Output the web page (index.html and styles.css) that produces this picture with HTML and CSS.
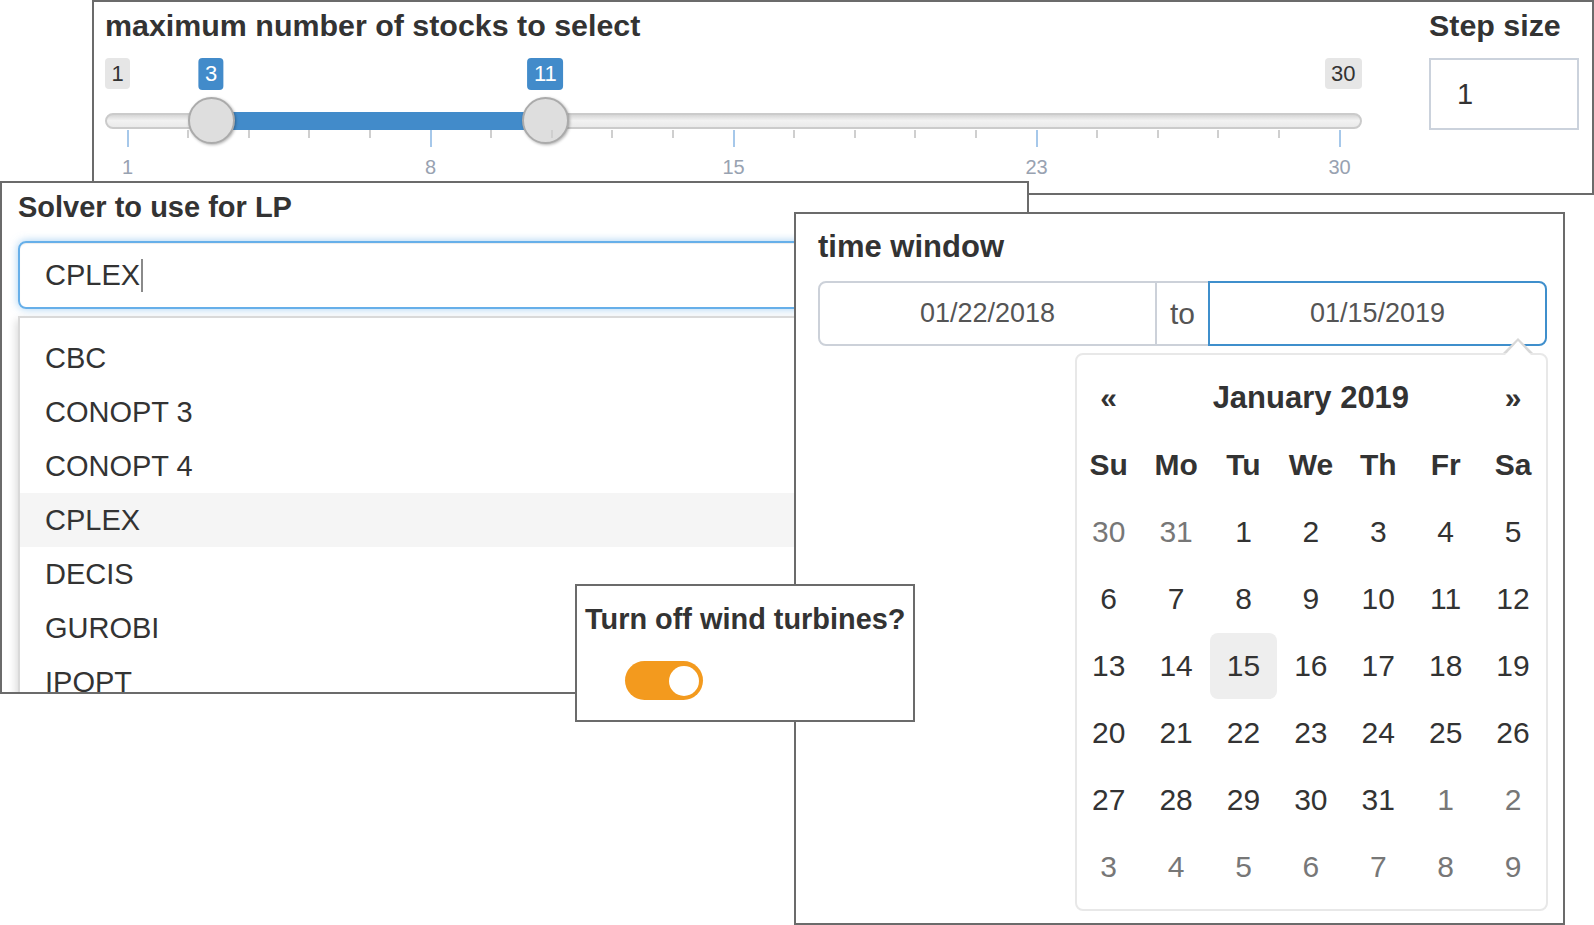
FILE: index.html
```html
<!DOCTYPE html>
<html lang="en">
<head>
<meta charset="utf-8">
<title>Shiny inputs</title>
<link rel="stylesheet" href="styles.css">
</head>
<body>
<main class="canvas">

  <section class="win win-slider">
    <div class="slider-col">
      <div class="ctl-label lbl-30">maximum number of stocks to select</div>
      <div class="irs">
        <div class="irs-line"></div>
        <span class="irs-min">1</span>
        <span class="irs-max">30</span>
        <div class="irs-scale">
          <div class="irs-bar" style="left:6.8966%;width:27.5862%"></div>
          <span class="irs-single" style="left:6.8966%">3</span>
          <span class="irs-single" style="left:34.4828%">11</span>
          <span class="irs-handle" style="left:6.8966%"></span>
          <span class="irs-handle" style="left:34.4828%"></span>

          <span class="tick major" style="left:0%"></span>
          <span class="tick" style="left:5%"></span>
          <span class="tick" style="left:10%"></span>
          <span class="tick" style="left:15%"></span>
          <span class="tick" style="left:20%"></span>
          <span class="tick major" style="left:25%"></span>
          <span class="tick" style="left:30%"></span>
          <span class="tick" style="left:35%"></span>
          <span class="tick" style="left:40%"></span>
          <span class="tick" style="left:45%"></span>
          <span class="tick major" style="left:50%"></span>
          <span class="tick" style="left:55%"></span>
          <span class="tick" style="left:60%"></span>
          <span class="tick" style="left:65%"></span>
          <span class="tick" style="left:70%"></span>
          <span class="tick major" style="left:75%"></span>
          <span class="tick" style="left:80%"></span>
          <span class="tick" style="left:85%"></span>
          <span class="tick" style="left:90%"></span>
          <span class="tick" style="left:95%"></span>
          <span class="tick major" style="left:100%"></span>

          <span class="tick-label" style="left:0%">1</span>
          <span class="tick-label" style="left:25%">8</span>
          <span class="tick-label" style="left:50%">15</span>
          <span class="tick-label" style="left:75%">23</span>
          <span class="tick-label" style="left:100%">30</span>
        </div>
      </div>
    </div>
    <div class="step-col">
      <div class="ctl-label lbl-30">Step size</div>
      <div class="num-input">1</div>
    </div>
  </section>

  <section class="win win-solver">
    <div class="ctl-label lbl-29">Solver to use for LP</div>
    <div class="sel-input"><span>CPLEX</span><span class="caret"></span></div>
    <div class="sel-dropdown">
      <div class="opt">CBC</div>
      <div class="opt">CONOPT 3</div>
      <div class="opt">CONOPT 4</div>
      <div class="opt active">CPLEX</div>
      <div class="opt">DECIS</div>
      <div class="opt">GUROBI</div>
      <div class="opt">IPOPT</div>
    </div>
  </section>

  <section class="win win-time">
    <div class="ctl-label lbl-31">time window</div>
    <div class="daterange">
      <div class="date-in date-left">01/22/2018</div>
      <div class="date-addon">to</div>
      <div class="date-in date-right">01/15/2019</div>
    </div>
    <div class="dp">
      <div class="dp-grid">
        <div class="dp-nav">«</div>
        <div class="dp-title">January 2019</div>
        <div class="dp-nav">»</div>

        <div class="dow">Su</div><div class="dow">Mo</div><div class="dow">Tu</div><div class="dow">We</div><div class="dow">Th</div><div class="dow">Fr</div><div class="dow">Sa</div>

        <div class="day old">30</div><div class="day old">31</div><div class="day">1</div><div class="day">2</div><div class="day">3</div><div class="day">4</div><div class="day">5</div>
        <div class="day">6</div><div class="day">7</div><div class="day">8</div><div class="day">9</div><div class="day">10</div><div class="day">11</div><div class="day">12</div>
        <div class="day">13</div><div class="day">14</div><div class="day active">15</div><div class="day">16</div><div class="day">17</div><div class="day">18</div><div class="day">19</div>
        <div class="day">20</div><div class="day">21</div><div class="day">22</div><div class="day">23</div><div class="day">24</div><div class="day">25</div><div class="day">26</div>
        <div class="day">27</div><div class="day">28</div><div class="day">29</div><div class="day">30</div><div class="day">31</div><div class="day new">1</div><div class="day new">2</div>
        <div class="day new">3</div><div class="day new">4</div><div class="day new">5</div><div class="day new">6</div><div class="day new">7</div><div class="day new">8</div><div class="day new">9</div>
      </div>
    </div>
  </section>

  <section class="win win-turb">
    <div class="ctl-label lbl-285">Turn off wind turbines?</div>
    <div class="switch"><span class="knob"></span></div>
  </section>

</main>
</body>
</html>
```

FILE: styles.css
```css
* { box-sizing: border-box; }
html, body { margin: 0; padding: 0; }
body {
  width: 1594px;
  height: 925px;
  overflow: hidden;
  background: #fff;
  color: #333;
  font-family: "Liberation Sans", Arial, Helvetica, sans-serif;
}
.canvas { position: relative; width: 1594px; height: 925px; }

/* floating windows on the canvas */
.win {
  position: absolute;
  background: #fff;
  border: 2px solid #6b6b6b;
}
.ctl-label { font-weight: bold; color: #333; white-space: nowrap; }
.lbl-30 { font-size: 30.4px; line-height: 34px; }
.lbl-29 { font-size: 29px; line-height: 33px; }
.lbl-31 { font-size: 31px; line-height: 36px; }
.lbl-285 { font-size: 28.9px; line-height: 33px; }

/* ---------- slider window ---------- */
.win-slider {
  left: 92px; top: 0; width: 1502px; height: 195px;
  padding: 6px 13px 0 11px;
  display: flex; gap: 67px;
  z-index: 1;
}
.slider-col { width: 1257px; flex: none; }
.step-col { width: 150px; flex: none; }

.irs { position: relative; height: 125px; margin-top: 15px; }
.irs-line {
  position: absolute; left: 0; right: 0; top: 56px; height: 16px;
  border: 2px solid #cbcbcb; border-radius: 8px;
  background: linear-gradient(to bottom, #d6d6d6 0%, #f2f2f2 45%, #eaeaea 100%);
}
.irs-min, .irs-max, .irs-single {
  position: absolute; top: 1px;
  height: 31px; line-height: 31px; padding: 0 6.5px;
  font-size: 22px; border-radius: 4px;
}
.irs-min, .irs-max { background: #e6e6e6; color: #333; }
.irs-min { left: 0; }
.irs-max { right: 0; }
.irs-scale { position: absolute; left: 22.5px; right: 22.5px; top: 0; bottom: 0; }
.irs-single {
  background: #428bca; color: #fff; height: 32px; line-height: 32px;
  transform: translateX(-50%);
}
.irs-bar { position: absolute; top: 55px; height: 18px; background: #428bca; }
.irs-handle {
  position: absolute; top: 39.5px; width: 47px; height: 47px; margin-left: -23.5px;
  border-radius: 50%; background: #dedede; border: 2px solid #ababab;
  box-shadow: 1px 1px 3px rgba(0,0,0,.3);
}
.tick {
  position: absolute; top: 73px; width: 2px; height: 8px; margin-left: -1px;
  background: #cfcfcf;
}
.tick.major { height: 17px; background: #a6c8ea; }
.tick-label {
  position: absolute; top: 98px; transform: translateX(-50%);
  font-size: 20px; line-height: 24px; color: #98a2b1;
}

.num-input {
  margin-top: 16px; height: 72px; width: 150px;
  border: 2px solid #cbd2dc;
  display: flex; align-items: center;
  padding-left: 26px; font-size: 29px; color: #333;
}

/* ---------- solver window ---------- */
.win-solver {
  left: 0; top: 181px; width: 1029px; height: 513px;
  padding: 8px 0 0 16px;
  overflow: hidden;
  z-index: 2;
}
.sel-input {
  margin-top: 17px; width: 1000px; height: 68px;
  border: 2px solid #66afe9; border-radius: 8px;
  box-shadow: inset 0 1px 1px rgba(0,0,0,.075), 0 0 8px rgba(102,175,233,.6);
  padding-left: 25px;
  display: flex; align-items: center;
  font-size: 29px; color: #333;
}
.caret { display: inline-block; width: 2px; height: 33px; background: #8a8a8a; margin-left: 1px; }
.sel-dropdown {
  margin-top: 7px; width: 1000px;
  border: 2px solid #d9d9d9; border-radius: 0 0 8px 8px;
  box-shadow: -2px 4px 8px rgba(0,0,0,.15);
  padding-top: 13px;
}
.opt { height: 54px; line-height: 54px; padding-left: 25px; font-size: 29px; color: #333; }
.opt.active { background: #f5f5f5; }

/* ---------- time window ---------- */
.win-time {
  left: 794px; top: 212px; width: 771px; height: 713px;
  padding: 15px 0 0 22px;
  z-index: 3;
}
.daterange { display: flex; margin-top: 16px; width: 729px; height: 65px; }
.date-in {
  width: 339px; height: 65px;
  border: 2px solid #ccd1d9;
  display: flex; align-items: center; justify-content: center;
  font-size: 27px; color: #555;
}
.date-left { border-radius: 8px 0 0 8px; }
.date-addon {
  width: 51px; height: 65px;
  border-top: 2px solid #ccd1d9; border-bottom: 2px solid #ccd1d9;
  display: flex; align-items: center; justify-content: center;
  font-size: 30px; color: #555; background: #fff;
}
.date-right { border-color: #3f8fcc; border-radius: 0 8px 8px 0; }

.dp {
  position: absolute; left: 279px; top: 139px;
  width: 473px; height: 558px;
  border: 2px solid #e8e8e8; border-radius: 8px;
  background: #fff;
  padding: 10px 0 8px;
}
.dp::before {
  content: ""; position: absolute; top: -17px; left: 426px;
  border-left: 15px solid transparent; border-right: 15px solid transparent;
  border-bottom: 15px solid #d8d8d8;
}
.dp::after {
  content: ""; position: absolute; top: -14px; left: 428px;
  border-left: 13px solid transparent; border-right: 13px solid transparent;
  border-bottom: 14px solid #fff;
}
.dp-grid {
  display: grid;
  margin-left: -2px;
  grid-template-columns: repeat(7, 67.4px);
  grid-auto-rows: 66.9px;
}
.dp-grid > div {
  display: flex; align-items: center; justify-content: center;
  font-size: 30px; color: #333;
}
.dp-grid > .dp-nav { font-weight: bold; font-size: 30px; }
.dp-grid > .dp-title { grid-column: span 5; font-weight: bold; font-size: 31px; }
.dp-grid > .dow { font-weight: bold; }
.dp-grid > .old, .dp-grid > .new { color: #777; }
.dp-grid > .active { background: #eee; border-radius: 8px; }

/* ---------- turbines window ---------- */
.win-turb {
  left: 575px; top: 584px; width: 340px; height: 138px;
  padding: 17px 0 0 8px;
  z-index: 4;
}
.switch {
  margin: 25px 0 0 40px;
  width: 78px; height: 39px; border-radius: 20px;
  background: #f39a1e;
  display: flex; align-items: center; justify-content: flex-end;
  padding-right: 4px;
}
.knob { width: 30px; height: 30px; border-radius: 50%; background: #fff; }
```
